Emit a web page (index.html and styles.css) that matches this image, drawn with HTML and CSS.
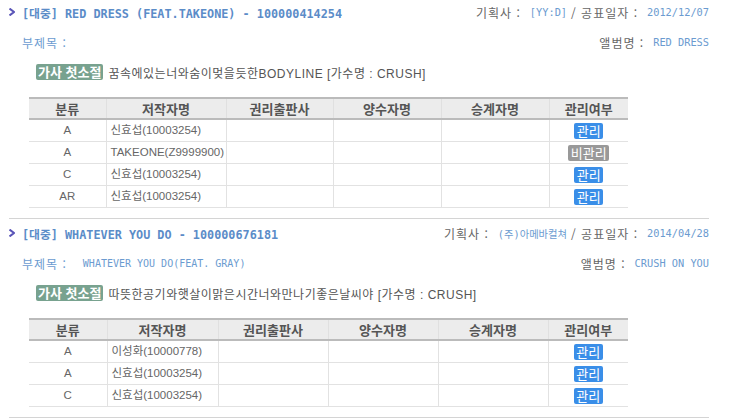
FILE: index.html
```html
<!DOCTYPE html>
<html lang="ko">
<head>
<meta charset="utf-8">
<link rel="stylesheet" href="styles.css">
</head>
<body>
<div class="block">
  <div class="row-title">
    <div class="title"><svg class="arrow" width="6" height="8" viewBox="0 0 6 8"><path d="M0.5 0.5 L5 4 L0.5 7.5" fill="none" stroke="#5a55b8" stroke-width="2"/></svg><span>[대중] RED DRESS (FEAT.TAKEONE) - 100000414254</span></div>
    <div class="meta"><span class="lbl">기획사 :</span><span class="val">[YY:D]</span><span class="lbl sep">/ 공표일자 :</span><span class="val">2012/12/07</span></div>
  </div>
  <div class="row-sub">
    <div class="sub"><span class="sublbl">부제목 :</span></div>
    <div class="meta"><span class="lbl">앨범명 :</span><span class="val">RED DRESS</span></div>
  </div>
  <div class="row-lyric"><span class="badge">가사 첫소절</span><span class="lyric">꿈속에있는너와숨이멎을듯한BODYLINE [가수명 : CRUSH]</span></div>
  <table class="grid">
    <colgroup><col class="c1"><col class="c2"><col class="c3"><col class="c4"><col class="c5"><col class="c6"></colgroup>
    <thead><tr><th>분류</th><th>저작자명</th><th>권리출판사</th><th>양수자명</th><th>승계자명</th><th>관리여부</th></tr></thead>
    <tbody>
      <tr><td class="ctr">A</td><td>신효섭(10003254)</td><td></td><td></td><td></td><td class="ctr"><span class="btn on">관리</span></td></tr>
      <tr><td class="ctr">A</td><td>TAKEONE(Z9999900)</td><td></td><td></td><td></td><td class="ctr"><span class="btn off">비관리</span></td></tr>
      <tr><td class="ctr">C</td><td>신효섭(10003254)</td><td></td><td></td><td></td><td class="ctr"><span class="btn on">관리</span></td></tr>
      <tr><td class="ctr">AR</td><td>신효섭(10003254)</td><td></td><td></td><td></td><td class="ctr"><span class="btn on">관리</span></td></tr>
    </tbody>
  </table>
</div>
<div class="block">
  <div class="row-title">
    <div class="title"><svg class="arrow" width="6" height="8" viewBox="0 0 6 8"><path d="M0.5 0.5 L5 4 L0.5 7.5" fill="none" stroke="#5a55b8" stroke-width="2"/></svg><span>[대중] WHATEVER YOU DO - 100000676181</span></div>
    <div class="meta"><span class="lbl">기획사 :</span><span class="val">(주)아메바컬쳐</span><span class="lbl sep">/ 공표일자 :</span><span class="val">2014/04/28</span></div>
  </div>
  <div class="row-sub">
    <div class="sub"><span class="sublbl">부제목 :</span><span class="subval">WHATEVER YOU DO(FEAT. GRAY)</span></div>
    <div class="meta"><span class="lbl">앨범명 :</span><span class="val">CRUSH ON YOU</span></div>
  </div>
  <div class="row-lyric"><span class="badge">가사 첫소절</span><span class="lyric">따뜻한공기와햇살이맑은시간너와만나기좋은날씨야 [가수명 : CRUSH]</span></div>
  <table class="grid alt">
    <colgroup><col class="c1"><col class="c2"><col class="c3"><col class="c4"><col class="c5"><col class="c6"></colgroup>
    <thead><tr><th>분류</th><th>저작자명</th><th>권리출판사</th><th>양수자명</th><th>승계자명</th><th>관리여부</th></tr></thead>
    <tbody>
      <tr><td class="ctr">A</td><td>이성화(10000778)</td><td></td><td></td><td></td><td class="ctr"><span class="btn on">관리</span></td></tr>
      <tr><td class="ctr">A</td><td>신효섭(10003254)</td><td></td><td></td><td></td><td class="ctr"><span class="btn on">관리</span></td></tr>
      <tr><td class="ctr">C</td><td>신효섭(10003254)</td><td></td><td></td><td></td><td class="ctr"><span class="btn on">관리</span></td></tr>
    </tbody>
  </table>
</div>
</body>
</html>
```
FILE: styles.css
```css
html, body {
  margin: 0;
  padding: 0;
  background: #fff;
}
body {
  font-family: "Liberation Sans", "Noto Sans CJK KR", sans-serif;
  font-size: 12px;
  color: #555;
}
.block {
  margin-left: 9px;
  width: 700px;
  padding: 2px 0 10px;
  border-bottom: 1px solid #d4d4d4;
}
.block + .block {
  margin-top: 2px;
}
.row-title, .row-sub {
  display: flex;
  justify-content: space-between;
  align-items: center;
}
.row-title {
  height: 20px;
}
.row-sub {
  height: 24px;
  margin-top: 8px;
}
.title {
  display: flex;
  align-items: center;
  font-family: "DejaVu Sans Mono", "Noto Sans CJK KR", monospace;
  font-weight: bold;
  font-size: 11.8px;
  color: #5b8cc8;
}
.arrow {
  margin-right: 7px;
}
.meta {
  display: flex;
  align-items: center;
  gap: 9px;
}
.lbl {
  color: #666;
  letter-spacing: 1px;
  font-family: "Noto Sans CJK KR", sans-serif;
}
.sep {
  margin-left: -5px;
}
.val {
  color: #6b9bd0;
  font-family: "DejaVu Sans Mono", "Noto Sans CJK KR", monospace;
  font-size: 10.3px;
}
.sub {
  padding-left: 13px;
  display: flex;
  align-items: center;
}
.sublbl {
  color: #6b9bd0;
  letter-spacing: 1px;
  font-family: "Noto Sans CJK KR", sans-serif;
}
.subval {
  margin-left: 16px;
  color: #6b9bd0;
  font-family: "DejaVu Sans Mono", monospace;
  font-size: 10px;
}
.row-lyric {
  display: flex;
  align-items: center;
  height: 24px;
  margin-top: 6px;
  padding-left: 27px;
}
.badge {
  background: #78a28f;
  color: #fff;
  font-weight: bold;
  font-size: 13px;
  line-height: 16px;
  height: 16px;
  padding: 0 2px;
  border-radius: 2px;
  font-family: "Noto Sans CJK KR", sans-serif;
}
.lyric {
  margin-left: 5px;
  color: #555;
  letter-spacing: 0.5px;
}
.grid {
  margin: 13px 0 0 20px;
  width: 599px;
  border-collapse: collapse;
  table-layout: fixed;
  border-top: 2px solid #bbb;
}
.c1 { width: 77px; }
.c2 { width: 120px; }
.c3 { width: 107px; }
.c4 { width: 108px; }
.c5 { width: 108px; }
.c6 { width: 79px; }
.alt .c1 { width: 78px; }
.alt .c2 { width: 111px; }
.alt .c3 { width: 110px; }
.alt .c4 { width: 110px; }
.alt .c5 { width: 110px; }
.alt .c6 { width: 80px; }
.grid th {
  background: #ececec;
  color: #555;
  font-weight: bold;
  font-size: 13px;
  height: 19px;
  padding: 0;
  line-height: 19px;
  border-bottom: 2px solid #bbb;
  border-left: 1px solid #e0e0e0;
  font-family: "Noto Sans CJK KR", sans-serif;
}
.grid th:first-child, .grid td:first-child {
  border-left: none;
}
.grid td {
  height: 21px;
  padding: 0 0 0 4px;
  border-bottom: 1px solid #e2e2e2;
  border-left: 1px solid #e2e2e2;
  color: #666;
  font-size: 11.5px;
  line-height: 21px;
  white-space: nowrap;
  overflow: hidden;
}
.grid td.ctr {
  text-align: center;
  padding: 0;
}
.btn {
  display: inline-block;
  vertical-align: middle;
  color: #fff;
  font-size: 13px;
  line-height: 16px;
  height: 16px;
  padding: 0 2.5px;
  border-radius: 2px;
  font-family: "Noto Sans CJK KR", sans-serif;
}
.btn.on { background: #3a8ee8; }
.btn.off { background: #999; }
```
